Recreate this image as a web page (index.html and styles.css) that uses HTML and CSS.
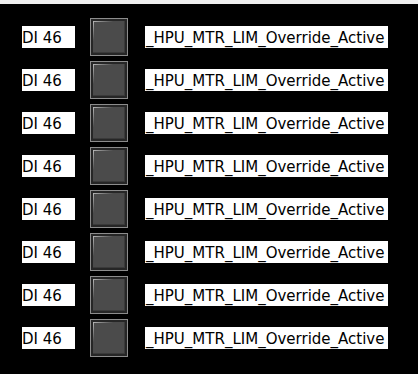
FILE: index.html
```html
<!DOCTYPE html>
<html>
<head>
<meta charset="utf-8">
<link rel="stylesheet" href="styles.css">
</head>
<body>
<div class="topbar"></div>
<div class="list">
  <div class="row"><span class="tag">DI 46</span><div class="btn"></div><span class="name">_HPU_MTR_LIM_Override_Active</span></div>
  <div class="row"><span class="tag">DI 46</span><div class="btn"></div><span class="name">_HPU_MTR_LIM_Override_Active</span></div>
  <div class="row"><span class="tag">DI 46</span><div class="btn"></div><span class="name">_HPU_MTR_LIM_Override_Active</span></div>
  <div class="row"><span class="tag">DI 46</span><div class="btn"></div><span class="name">_HPU_MTR_LIM_Override_Active</span></div>
  <div class="row"><span class="tag">DI 46</span><div class="btn"></div><span class="name">_HPU_MTR_LIM_Override_Active</span></div>
  <div class="row"><span class="tag">DI 46</span><div class="btn"></div><span class="name">_HPU_MTR_LIM_Override_Active</span></div>
  <div class="row"><span class="tag">DI 46</span><div class="btn"></div><span class="name">_HPU_MTR_LIM_Override_Active</span></div>
  <div class="row"><span class="tag">DI 46</span><div class="btn"></div><span class="name">_HPU_MTR_LIM_Override_Active</span></div>
</div>
</body>
</html>
```
FILE: styles.css
```css
html, body {
  margin: 0;
  padding: 0;
  background: #000;
  height: 100%;
  overflow: hidden;
}
.topbar {
  height: 4px;
  background: #f0f0f0;
}
.list {
  display: flex;
  flex-direction: column;
  gap: 5px;
  padding-top: 14px;
  padding-left: 22px;
}
.row {
  display: flex;
  align-items: center;
  height: 38px;
}
.tag, .name {
  background: #fff;
  color: #000;
  font-family: "DejaVu Sans Condensed", "DejaVu Sans", sans-serif;
  font-size: 16.7px;
  height: 22px;
  line-height: 22px;
  box-sizing: border-box;
  white-space: nowrap;
  overflow: hidden;
}
.tag {
  width: 53px;
}
.name {
  width: 243px;
  padding-left: 1px;
}
.btn {
  box-sizing: border-box;
  width: 38px;
  height: 38px;
  margin-left: 15px;
  margin-right: 17px;
  border: 1px solid #8c8c8c;
  background: #262626;
  padding: 2px;
}
.btn::after {
  content: "";
  display: block;
  width: 100%;
  height: 100%;
  box-sizing: border-box;
  background:
    linear-gradient(to right, #b4b4b4, #4b4b4b 65%) top left / 100% 1px no-repeat,
    linear-gradient(to bottom, #b4b4b4, #4b4b4b 65%) top left / 1px 100% no-repeat,
    #4b4b4b;
  border-right: 1px solid #3a3a3a;
  border-bottom: 1px solid #3a3a3a;
}
```
